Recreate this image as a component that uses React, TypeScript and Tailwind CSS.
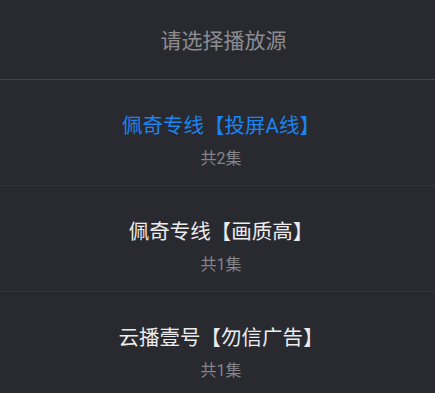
import React from "react";

type Source = {
  name: string;
  count: number;
};

const sources: Source[] = [
  { name: "佩奇专线【投屏A线】", count: 2 },
  { name: "佩奇专线【画质高】", count: 1 },
  { name: "云播壹号【勿信广告】", count: 1 },
];

export default function App() {
  const active = 0;

  return (
    <div
      className="w-[435px] h-[393px] overflow-hidden bg-[#292a30]"
      style={{ fontFamily: 'Roboto, "Noto Sans CJK SC", sans-serif' }}
    >
      <div className="h-[80px] flex items-center justify-center pl-[12px] border-b border-[#46474c]">
        <h1 className="text-[21px] text-[#8c8c90] leading-none pt-[3px]">请选择播放源</h1>
      </div>
      {sources.map((s, i) => (
        <div
          key={i}
          className="h-[106px] flex flex-col items-center pt-[36px] pl-[7px] border-b border-[#333439]"
        >
          <p className={"text-[20.5px] leading-none " + (i === active ? "text-[#1b84f2]" : "text-[#ececee]")}>
            {s.name}
          </p>
          <p className="mt-[14px] text-[16px] leading-none text-[#85858a]">共{s.count}集</p>
        </div>
      ))}
    </div>
  );
}
